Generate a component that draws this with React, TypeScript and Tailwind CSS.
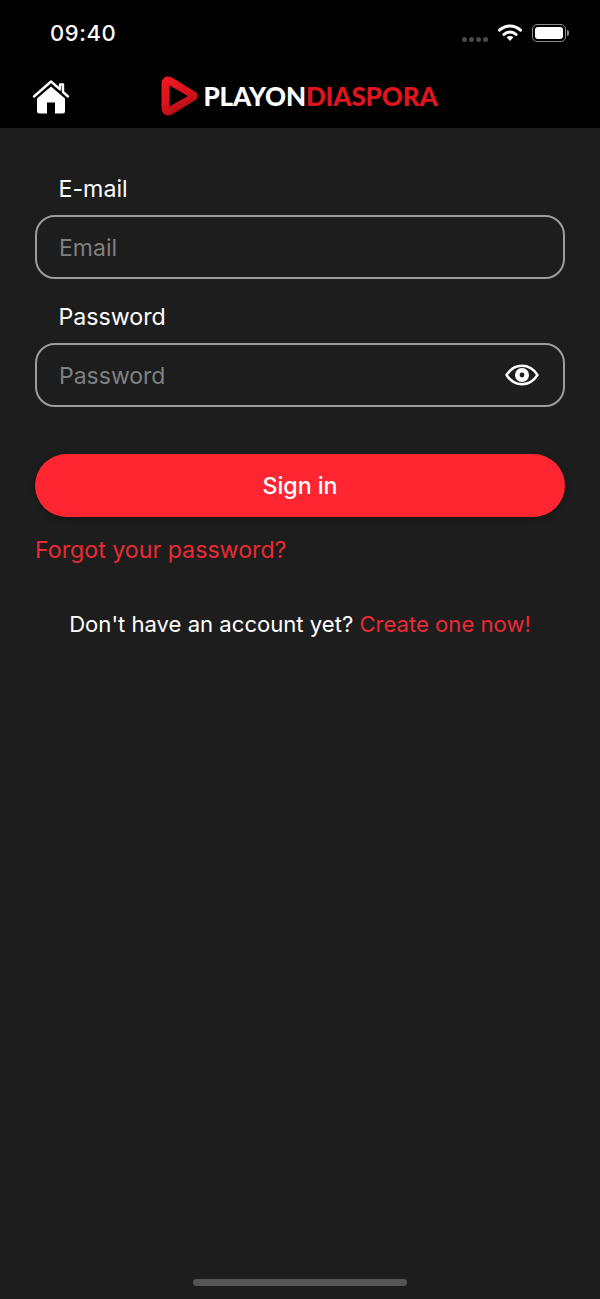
const font = "font-['Inter','Noto_Sans',sans-serif]";

function StatusBar() {
  return (
    <div className="flex h-[64px] items-start justify-between pl-[50px] pr-[31px] pt-[20px]">
      <span className="text-[22px] font-medium leading-[26px] tracking-[0.6px] text-white">09:40</span>
      <div className="flex items-center pt-[3px]">
        <div className="mr-[10px] mt-[14px] flex gap-[2px]">
          <span className="size-[5px] rounded-full bg-[#4a4a4a]" />
          <span className="size-[5px] rounded-full bg-[#4a4a4a]" />
          <span className="size-[5px] rounded-full bg-[#4a4a4a]" />
          <span className="size-[5px] rounded-full bg-[#4a4a4a]" />
        </div>
        <svg width="24" height="18" viewBox="0 0 24 18" className="mr-[10px]">
          <path d="M1.5 6.2C7.5 0.6 16.5 0.6 22.5 6.2" fill="none" stroke="#fff" strokeWidth="3" strokeLinecap="round" />
          <path d="M6 10.4C9.5 7.2 14.5 7.2 18 10.4" fill="none" stroke="#fff" strokeWidth="3" strokeLinecap="round" />
          <path d="M8.6 13.2C10.6 11.5 13.4 11.5 15.4 13.2L12 17Z" fill="#fff" />
        </svg>
        <div className="flex items-center">
          <div className="flex h-[18px] w-[34px] items-center rounded-[5px] border border-[#8a8a8a] p-[2px]">
            <div className="h-full w-full rounded-[3px] bg-white" />
          </div>
          <div className="ml-[1px] h-[6px] w-[2px] rounded-r-full bg-[#8a8a8a]" />
        </div>
      </div>
    </div>
  );
}

function Logo() {
  return (
    <div className="flex items-center">
      <svg width="40" height="42" viewBox="0 0 40 42">
        <defs>
          <linearGradient id="playGrad" x1="0.1" y1="0" x2="0.6" y2="1">
            <stop offset="0" stopColor="#f01820" />
            <stop offset="0.6" stopColor="#d8121a" />
            <stop offset="1" stopColor="#a50e15" />
          </linearGradient>
        </defs>
        <path
          fillRule="evenodd"
          d="M1.5 9C1.5 2.5 7 0 12 2.5L35.5 17C38.5 19 38.5 23 35.5 25L12 39.5C7 42 1.5 39.5 1.5 33ZM9.5 10.5L9.5 31.5L28 21Z"
          fill="url(#playGrad)"
        />
      </svg>
      <span className="ml-[3px] font-['Lato',sans-serif] text-[26px] font-black leading-none tracking-[-0.13px] text-white">
        PLAYON<span className="text-[#e0141c]">DIASPORA</span>
      </span>
    </div>
  );
}

function Header() {
  return (
    <div className="relative flex h-[64px] items-start justify-center bg-black pt-[8px]">
      <svg width="38" height="36" viewBox="0 0 38 36" className="absolute left-[32px] top-[15px]">
        <path d="M2 17.5 L19 2.5 L28 10.4 L28 5.5 L31 5.5 L31 13 L36 17.5" fill="none" stroke="#fff" strokeWidth="2.4" strokeLinecap="round" strokeLinejoin="round" />
        <path fillRule="evenodd" d="M19 7.5 L33 19.5 L33 32 Q33 34.5 30.5 34.5 L7.5 34.5 Q5 34.5 5 32 L5 19.5 Z M15 23.5 L15 34.5 L23 34.5 L23 23.5 Z" fill="#fff" />
      </svg>
      <div className="ml-[-2px] pt-[3px]">
        <Logo />
      </div>
    </div>
  );
}

function Field({ label, placeholder, eye }: { label: string; placeholder: string; eye?: boolean }) {
  return (
    <div>
      <div className="pl-[23.5px] text-[23.2px] leading-[28px] text-white">{label}</div>
      <div className="mt-[12px] flex h-[64px] items-center justify-between rounded-[20px] border-2 border-[#9c9c9c] pl-[22px] pr-[24px]">
        <span className="pt-[2px] text-[23px] text-[#808080]">{placeholder}</span>
        {eye && (
          <svg width="34" height="22" viewBox="0 0 34 22">
            <path d="M1.5 11C5.5 4.8 11 1.8 17 1.8S28.5 4.8 32.5 11C28.5 17.2 23 20.2 17 20.2S5.5 17.2 1.5 11Z" fill="none" stroke="#fff" strokeWidth="2.4" strokeLinejoin="round" />
            <circle cx="17" cy="11" r="7" fill="#fff" />
            <circle cx="17" cy="11" r="2.4" fill="#1d1d1d" />
          </svg>
        )}
      </div>
    </div>
  );
}

export default function App() {
  return (
    <div className={`flex h-[1299px] w-[600px] flex-col overflow-hidden bg-[#1d1d1d] ${font}`}>
      <div className="bg-black">
        <StatusBar />
        <Header />
      </div>
      <div className="flex-1 px-[35px] pt-[47px]">
        <Field label="E-mail" placeholder="Email" />
        <div className="mt-[24px]">
          <Field label="Password" placeholder="Password" eye />
        </div>
        <button className="mt-[47px] flex h-[63px] w-full items-center justify-center rounded-full bg-[#ff2632] pt-[2px] text-[23.2px] font-medium text-white shadow-[0_2px_6px_rgba(0,0,0,0.35)]">
          Sign in
        </button>
        <div className="mt-[19px] text-[23.2px] leading-[28px] text-[#ea2a33]">Forgot your password?</div>
        <div className="mt-[46px] text-center text-[22.1px] leading-[28px] text-white">
          Don't have an account yet? <span className="text-[#ea2a33]">Create one now!</span>
        </div>
      </div>
      <div className="flex justify-center pb-[13px]">
        <div className="h-[7px] w-[214px] rounded-full bg-[#555555]" />
      </div>
    </div>
  );
}
